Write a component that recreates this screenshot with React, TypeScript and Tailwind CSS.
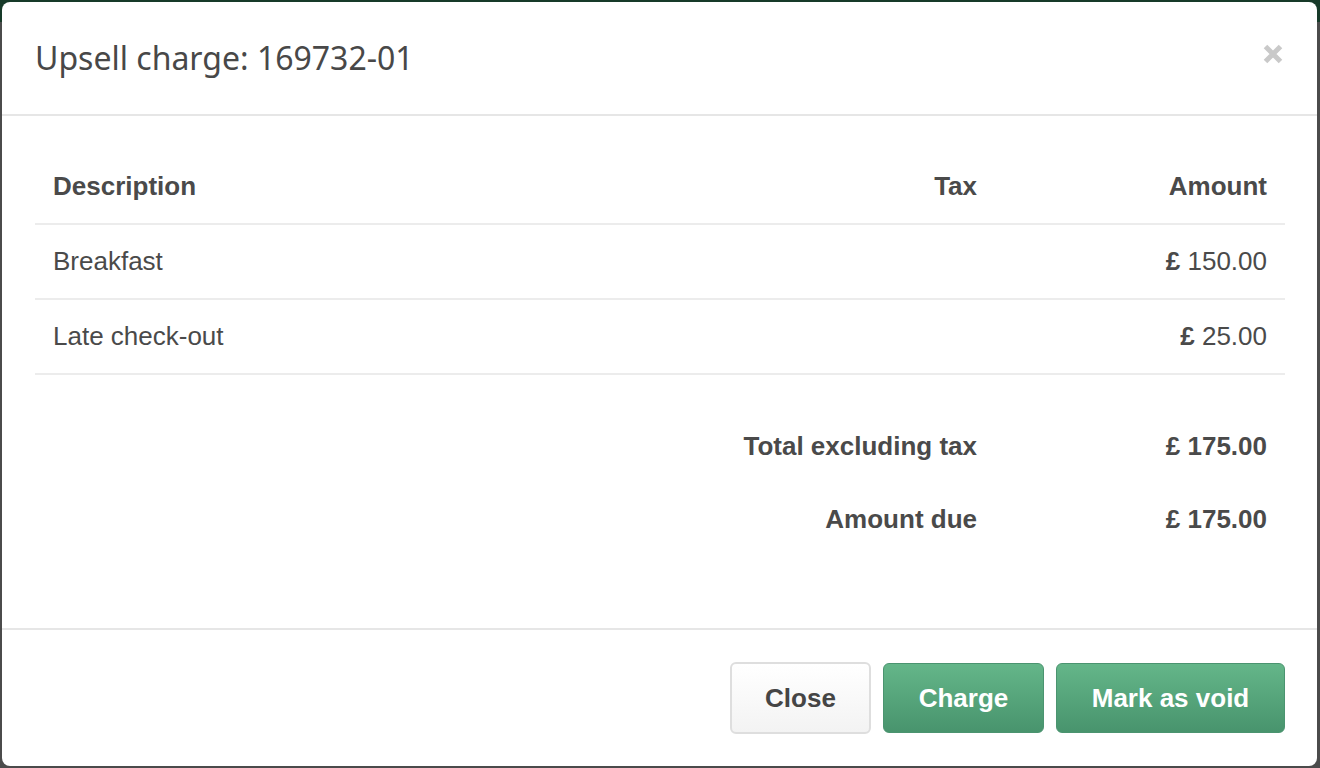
import React from "react";

const rows = [
  { desc: "Breakfast", tax: "", amount: "150.00" },
  { desc: "Late check-out", tax: "", amount: "25.00" },
];

const totals = [
  { label: "Total excluding tax", value: "175.00" },
  { label: "Amount due", value: "175.00" },
];

function Money({ value, bold }: { value: string; bold?: boolean }) {
  return (
    <span>
      <span className="font-bold">£</span>{" "}
      <span className={bold ? "font-bold" : ""}>{value}</span>
    </span>
  );
}

export default function App() {
  return (
    <div className="h-[768px] w-[1320px] overflow-hidden bg-[linear-gradient(to_bottom,#173a29_0,#173a29_22px,#4b4b4b_22px)] pb-[2px] pl-[2px] pr-[3px] pt-[2px]">
      <div
        className="flex h-full flex-col rounded-[8px] bg-white text-[#4a4a4a]"
        style={{ fontFamily: '"Liberation Sans", Arial, sans-serif' }}
      >
        {/* header */}
        <div className="flex h-[114px] shrink-0 items-center justify-between border-b-2 border-[#e6e6e6] pl-[33px] pr-[34px]">
          <h1
            className="text-[32px] font-normal tracking-[0px] text-[#484848]"
            style={{ fontFamily: '"Noto Sans", "Open Sans", sans-serif' }}
          >
            Upsell charge: 169732-01
          </h1>
          <svg width="20" height="20" viewBox="0 0 20 20" className="mb-[8px]">
            <path d="M2.5 2.5 L17.5 17.5 M17.5 2.5 L2.5 17.5" stroke="#c9c9c9" strokeWidth="5" strokeLinecap="butt" />
          </svg>
        </div>

        {/* body */}
        <div className="flex-1 pl-[33px] pr-[32px] pt-[34px] text-[26px]">
          <div className="grid h-[75px] grid-cols-[1fr_200px_290px] items-center border-b-2 border-[#ececec] px-[18px] font-bold">
            <div>Description</div>
            <div className="text-right">Tax</div>
            <div className="text-right">Amount</div>
          </div>
          {rows.map((r) => (
            <div
              key={r.desc}
              className="grid h-[75px] grid-cols-[1fr_200px_290px] items-center border-b-2 border-[#ececec] px-[18px]"
            >
              <div>{r.desc}</div>
              <div className="text-right">{r.tax}</div>
              <div className="text-right">
                <Money value={r.amount} />
              </div>
            </div>
          ))}
          <div className="pt-[35px]">
            {totals.map((t) => (
              <div key={t.label} className="grid h-[73px] grid-cols-[1fr_290px] items-center px-[18px] font-bold">
                <div className="text-right">{t.label}</div>
                <div className="text-right">
                  <Money value={t.value} bold />
                </div>
              </div>
            ))}
          </div>
        </div>

        {/* footer */}
        <div className="flex h-[138px] shrink-0 items-center justify-end gap-[12px] border-t-2 border-[#e6e6e6] px-[32px] text-[26px] font-bold">
          <button className="h-[72px] w-[141px] rounded-[6px] border-2 border-[#dedede] bg-[linear-gradient(to_bottom,#ffffff,#f3f3f3)] text-[#454545]">
            Close
          </button>
          <button className="h-[70px] w-[161px] rounded-[6px] border border-[#4b9470] bg-[linear-gradient(to_bottom,#64b689,#48946d)] text-white">
            Charge
          </button>
          <button className="h-[70px] w-[229px] rounded-[6px] border border-[#4b9470] bg-[linear-gradient(to_bottom,#64b689,#48946d)] text-white">
            Mark as void
          </button>
        </div>
      </div>
    </div>
  );
}
